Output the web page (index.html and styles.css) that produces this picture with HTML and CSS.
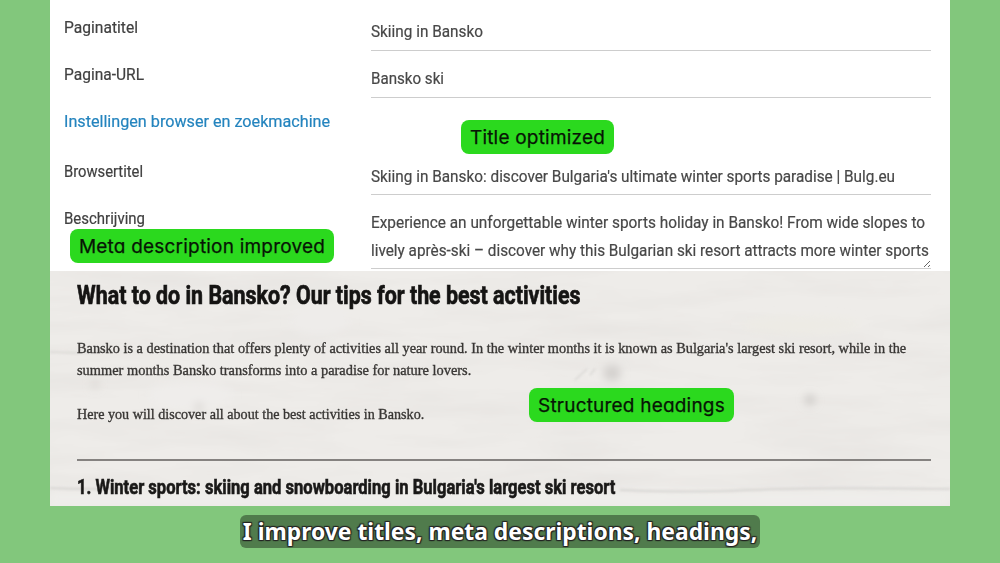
FILE: index.html
```html
<!DOCTYPE html>
<html lang="nl">
<head>
<meta charset="utf-8">
<title>Skiing in Bansko</title>
<link rel="stylesheet" href="styles.css">
</head>
<body>
<main class="stage">
  <section class="form">
    <div class="row"><div class="label"><span class="fit w-975">Paginatitel</span></div><div class="field"><span class="fit w-958">Skiing in Bansko</span></div></div>
    <div class="row"><div class="label"><span class="fit w-971">Pagina-URL</span></div><div class="field"><span class="fit w-945">Bansko ski</span></div></div>
    <div class="row link-row"><div class="label link"><span class="fit w-1010">Instellingen browser en zoekmachine</span></div></div>
    <div class="row"><div class="label"><span class="fit w-922">Browsertitel</span></div><div class="field low"><span class="fit w-958">Skiing in Bansko: discover Bulgaria's ultimate winter sports paradise | Bulg.eu</span></div></div>
    <div class="row area-row"><div class="label"><span class="fit w-936">Beschrijving</span></div>
      <div class="field area"><span class="fit w-960">Experience an unforgettable winter sports holiday in Bansko! From wide slopes to</span><span class="fit w-956">lively après-ski – discover why this Bulgarian ski resort attracts more winter sports</span>
        <svg class="grip" width="8" height="8" viewBox="0 0 8 8"><path d="M1 7L7 1M5 7L7 5" stroke="#666" fill="none"/></svg>
      </div>
    </div>
    <div class="badge badge-title"><span class="badge-text">Title optimized</span></div>
    <div class="badge badge-meta"><span class="badge-text">Meta description improved</span></div>
  </section>
  <section class="article">
    <svg class="wood" width="900" height="235" viewBox="0 0 900 235">
      <defs>
        <filter id="grain" x="0" y="0" width="100%" height="100%"><feTurbulence type="fractalNoise" baseFrequency="0.007 0.04" numOctaves="4" seed="8"/><feColorMatrix values="0 0 0 0 .64  0 0 0 0 .61  0 0 0 0 .59  .4 0 0 0 -.15"/></filter>
        <filter id="soft" x="-50%" y="-100%" width="200%" height="300%"><feGaussianBlur stdDeviation="4"/></filter>
        <filter id="thin" x="-10%" y="-200%" width="120%" height="500%"><feGaussianBlur stdDeviation="1"/></filter>
      </defs>
      <rect width="900" height="235" fill="#eeece9"/>
      <rect width="900" height="235" filter="url(#grain)"/>
      <g filter="url(#soft)">
        <ellipse cx="562" cy="102" rx="9" ry="8" fill="#d3d0cd"/>
        <ellipse cx="760" cy="129" rx="5" ry="5" fill="#cbc7c4"/>
        <ellipse cx="140" cy="124" rx="42" ry="14" fill="#efedeb"/>
        <ellipse cx="750" cy="54" rx="60" ry="9" fill="#edebe5"/>
        <ellipse cx="270" cy="50" rx="30" ry="14" fill="#eeecea"/>
        <ellipse cx="149" cy="136" rx="4" ry="4" fill="#d6d2cf"/>
        <ellipse cx="45" cy="113" rx="3" ry="4" fill="#d6d2cf"/>
        <path d="M0 221H900V235H0Z" fill="#efeeeb"/>
      </g>
      <g filter="url(#thin)" fill="none" stroke="#cdcbc8" stroke-width="1.5">
        <path d="M0 217Q40 219 90 217M570 219Q640 222 700 219T900 218" opacity=".8"/>
        <path d="M0 81Q30 83 60 80M525 109L537 98M540 104L545 98" opacity=".6"/>
      </g>
    </svg>
    <h1 class="title"><span class="fit w-title">What to do in Bansko? Our tips for the best activities</span></h1>
    <p class="text"><span class="fit w-p1">Bansko is a destination that offers plenty of activities all year round. In the winter months it is known as Bulgaria's largest ski resort, while in the</span><span class="fit w-p2">summer months Bansko transforms into a paradise for nature lovers.</span></p>
    <p class="text"><span class="fit w-p3">Here you will discover all about the best activities in Bansko.</span></p>
    <hr class="rule">
    <h2 class="subtitle"><span class="fit w-sub">1. Winter sports: skiing and snowboarding in Bulgaria's largest ski resort</span></h2>
    <div class="badge badge-headings"><span class="badge-text">Structured headings</span></div>
  </section>
  <p class="caption"><span>I improve titles, meta descriptions, headings,</span></p>
</main>
</body>
</html>
```
FILE: styles.css
```css
* { box-sizing: border-box; }
body { margin: 0; height: 563px; overflow: hidden; background: #82c77c; font-family: Roboto, sans-serif; }
h1, h2, p { margin: 0; }
.stage { width: 900px; margin-left: 50px; display: flex; flex-direction: column; }

.form { position: relative; height: 271px; padding: 4px 19px 0 14px; background: #fff; color: #484848; font-size: 16px; -webkit-text-stroke: .2px; }
.row { display: grid; grid-template-columns: 307px 560px; height: 47px; }
.label { padding-top: 12px; line-height: 24px; color: #414141; }
.link-row { height: 50px; }
.link { color: #2484be; }
.field { border-bottom: 1px solid #cdcdcd; line-height: 24px; padding-top: 16px; }
.low { padding-top: 17px; }
.area-row { height: 73px; }
.area { position: relative; line-height: 28px; padding-top: 14px; height: 74px; }
.grip { position: absolute; right: 0; bottom: 0; }

.fit { display: block; width: max-content; white-space: nowrap; transform-origin: 0 50%; }
.w-975 { transform: scaleX(.975); }
.w-971 { transform: scaleX(.971); }
.w-958 { transform: scaleX(.958); }
.w-960 { transform: scaleX(.9605); }
.w-956 { transform: scaleX(.956); }
.w-945 { transform: scaleX(.945); }
.w-936 { transform: scaleX(.936); }
.w-922 { transform: scaleX(.922); }
.w-1010 { transform: scaleX(1.01); }
.w-title { transform: scaleX(.8225); }
.w-sub { transform: scaleX(.8285); }
.w-p1 { transform: scaleX(.9536); }
.w-p2 { transform: scaleX(.96); }
.w-p3 { transform: scaleX(.942); }

.badge { position: absolute; height: 34px; padding-top: 1px; border-radius: 8px; background: #2bd91e; color: #071505; display: flex; align-items: center; justify-content: center; white-space: nowrap; font: 400 19px/35px Inter, sans-serif; font-feature-settings: "cv11"; letter-spacing: .2px; -webkit-text-stroke: .25px; }
.badge-title { left: 411px; top: 120px; width: 153px; }
.badge-meta { left: 20px; top: 229px; width: 264px; }
.badge-headings { left: 479px; top: 117px; width: 205px; }

.article { position: relative; isolation: isolate; height: 235px; padding: 7px 19px 0 27px; background: #ebe9e6; color: #383634; overflow: hidden; }
.wood { position: absolute; inset: 0; z-index: -1; width: 100%; height: 100%; }
.title { font-size: 26px; line-height: 34px; color: #151413; -webkit-text-stroke: .7px; }
.subtitle { font-size: 20px; line-height: 28px; color: #1a1918; margin-top: 12px; -webkit-text-stroke: .6px; }
.text { font: 15px/22px "Liberation Serif", serif; margin-bottom: 22px; -webkit-text-stroke: .35px; }
.title + .text { margin-top: 25px; }
.rule { height: 2px; border: 0; margin: 34px 0 0; background: #858280; }

.caption { align-self: center; margin-top: 9px; height: 33px; padding: 0 3px; border-radius: 6px; background: #507b4c; color: #fff; font: 700 22.85px/34px "Noto Sans", sans-serif; white-space: nowrap; text-shadow: 1px 1px 1px #222, -1px -1px 1px #222, 1px -1px 1px #222, -1px 1px 1px #222; }
```
